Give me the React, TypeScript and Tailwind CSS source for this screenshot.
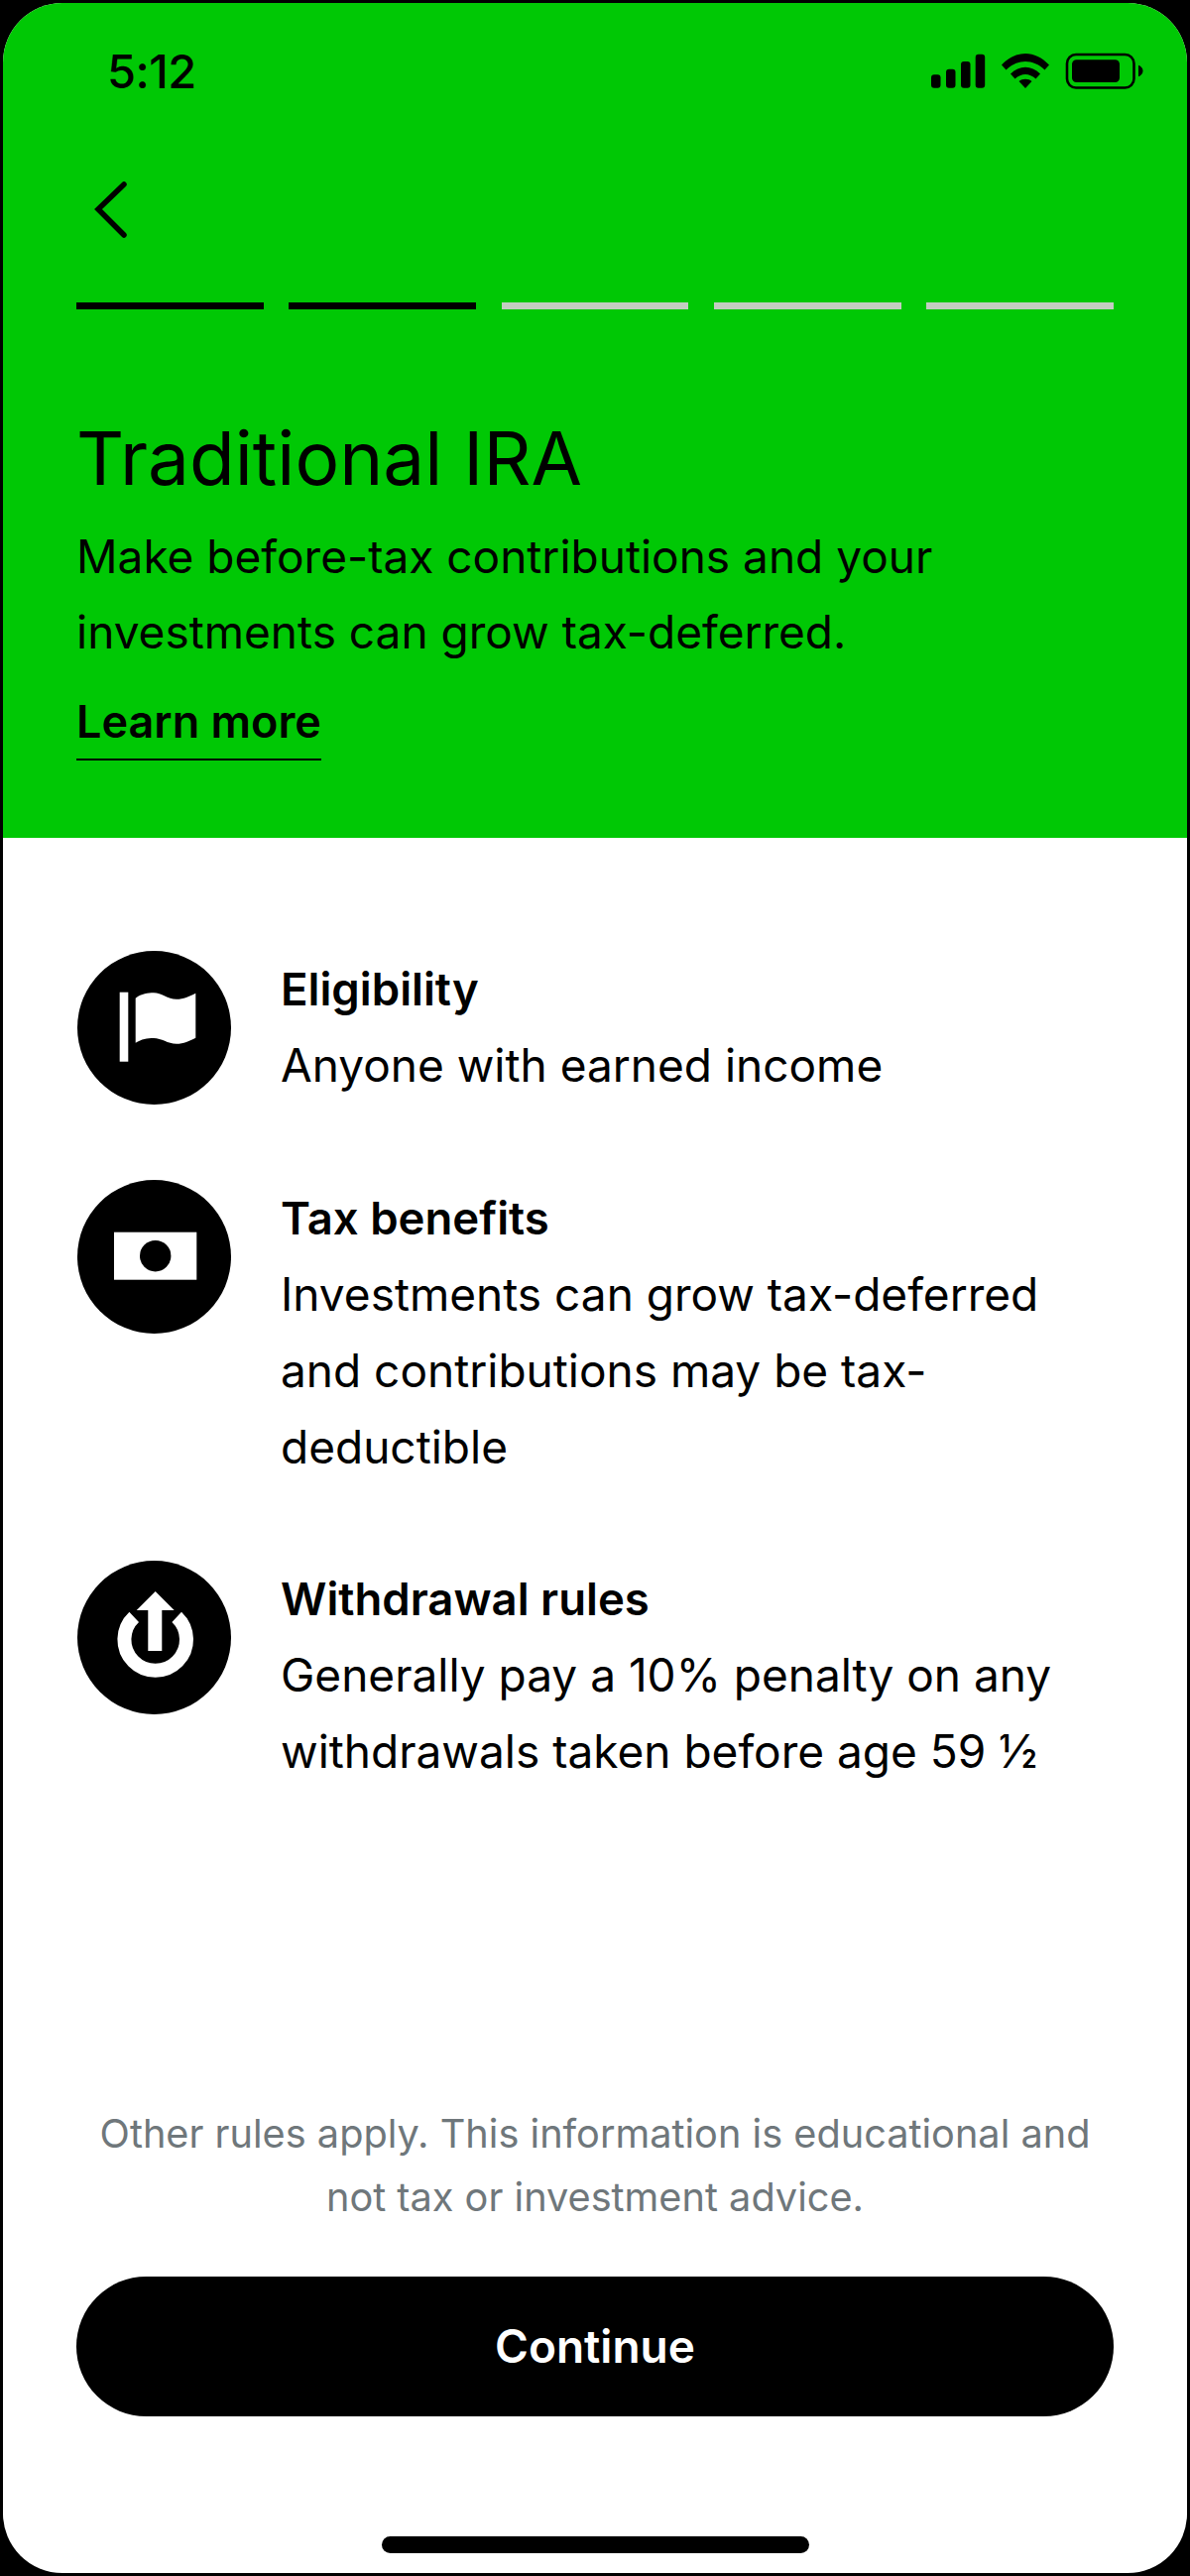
const font = "font-['Inter',sans-serif]";

const StatusIcons = () => (
  <svg width="214" height="37" viewBox="940 55 214 37" fill="black">
    <rect x="940" y="77.3" width="9.5" height="13.4" rx="3" />
    <rect x="955" y="71.7" width="9.5" height="19" rx="3" />
    <rect x="970" y="64" width="9.5" height="26.7" rx="3" />
    <rect x="984.7" y="56.7" width="9.5" height="34" rx="3" />
    <path d="M1011 67.5 C1025 52 1045 52 1059 67.5 L1054.5 72.5 C1043 61 1027 61 1015.5 72.5 Z" />
    <path d="M1020 76.5 C1029 67.5 1041 67.5 1050 76.5 L1045.5 81.5 C1039 75.5 1031 75.5 1024.5 81.5 Z" />
    <path d="M1028.5 84 C1032 81 1038 81 1041.5 84 L1035 91 Z" />
    <rect x="1077" y="57" width="67.5" height="33.5" rx="9" fill="none" stroke="black" strokeWidth="2.6" />
    <rect x="1082" y="62.3" width="48" height="22.7" rx="4.5" />
    <path d="M1149 67.7 C1152 69 1153.5 71 1153.5 73.5 C1153.5 76 1152 78 1149 79.3 Z" />
  </svg>
);

const FlagIcon = () => (
  <svg width="155" height="155" viewBox="0 0 155 155" className="shrink-0">
    <circle cx="77.5" cy="77.5" r="77.5" fill="black" />
    <rect x="42.7" y="41.7" width="8.6" height="70" fill="white" />
    <path
      d="M58.7 47.7 C65 43 71 42.3 77 42.3 C85 42.3 91 48.7 100 48.7 C107 48.7 113 46 119.3 42.7 L119.3 87.7 C113 91 107 93.7 100 93.7 C91 93.7 85 88 77 88 C70 88 65 89 58.7 92.7 Z"
      fill="white"
    />
  </svg>
);

const MoneyIcon = () => (
  <svg width="155" height="155" viewBox="0 0 155 155" className="shrink-0">
    <circle cx="77.5" cy="77.5" r="77.5" fill="black" />
    <rect x="37" y="52.7" width="83.3" height="48" fill="white" />
    <circle cx="78.7" cy="76.7" r="15.7" fill="black" />
  </svg>
);

const WithdrawIcon = () => (
  <svg width="155" height="155" viewBox="0 0 155 155" className="shrink-0">
    <circle cx="77.5" cy="77.5" r="77.5" fill="black" />
    <path d="M57.2 56.8 A31.3 31.3 0 1 0 100.2 56.8" fill="none" stroke="white" strokeWidth="14" />
    <path d="M78.7 31 L97.7 50 L85.3 50 L85.3 91 L71.3 91 L71.3 50 L59.7 50 Z" fill="white" />
  </svg>
);

const rows = [
  { title: "Eligibility", icon: <FlagIcon />, lines: ["Anyone with earned income"] },
  {
    title: "Tax benefits",
    icon: <MoneyIcon />,
    lines: ["Investments can grow tax-deferred", "and contributions may be tax-", "deductible"],
  },
  {
    title: "Withdrawal rules",
    icon: <WithdrawIcon />,
    lines: ["Generally pay a 10% penalty on any", "withdrawals taken before age 59 ½"],
  },
];

export default function App() {
  return (
    <div className={`w-[1200px] h-[2598px] bg-black p-[3px] text-black ${font}`}>
      <div className="h-full rounded-[60px] overflow-hidden bg-white flex flex-col">
        <div className="h-[842px] shrink-0 bg-[#00c805] px-[74px]">
          <div className="h-[138px] flex items-center justify-between pb-[2px]">
            <span className="ml-[31px] text-[47px] font-medium leading-none tracking-[-0.5px]">5:12</span>
            <span className="-mr-[30px]"><StatusIcons /></span>
          </div>
          <svg width="36" height="60" viewBox="0 0 36 60" className="mt-[41px] ml-[17px] block">
            <polyline points="31,4 5,29 31,55" fill="none" stroke="black" strokeWidth="5.5" strokeLinecap="round" />
          </svg>
          <div className="mt-[63px] flex gap-[25.5px]">
            <div className="w-[189px] h-[7px] bg-black" />
            <div className="w-[189px] h-[7px] bg-black" />
            <div className="w-[189px] h-[7px] bg-[#c3cdc1]" />
            <div className="w-[189px] h-[7px] bg-[#c3cdc1]" />
            <div className="w-[189px] h-[7px] bg-[#c3cdc1]" />
          </div>
          <h1 className="mt-[106px] text-[74.7px] leading-[88px] font-normal">Traditional IRA</h1>
          <p className="mt-[17px] text-[46px] leading-[76px]">
            Make before-tax contributions and your
            <br />
            investments can grow tax-deferred.
          </p>
          <div className="mt-[23px]">
            <a className="inline-block text-[45px] leading-[60px] font-semibold border-b-2 border-black pb-[7px]">
              Learn more
            </a>
          </div>
        </div>

        <div className="flex-1 flex flex-col">
          <div className="mt-[114px] ml-[75px] flex flex-col gap-[76px]">
            {rows.map((row) => (
              <div key={row.title} className="flex gap-[50px] min-h-[155px]">
                {row.icon}
                <div className="text-[46px] leading-[77px]">
                  <div className="font-semibold text-[45.5px]">{row.title}</div>
                  {row.lines.map((line) => (
                    <div key={line}>{line}</div>
                  ))}
                </div>
              </div>
            ))}
          </div>

          <div className="mt-auto flex flex-col items-center">
            <p className="text-center text-[39.7px] leading-[64px] text-[#6f777b]">
              Other rules apply. This information is educational and
              <br />
              not tax or investment advice.
            </p>
            <button className="mt-[48px] w-[1046px] h-[141px] rounded-full bg-black text-white text-[46px] font-semibold">
              Continue
            </button>
            <div className="mt-[121px] mb-[20px] w-[431px] h-[17px] rounded-full bg-black" />
          </div>
        </div>
      </div>
    </div>
  );
}
